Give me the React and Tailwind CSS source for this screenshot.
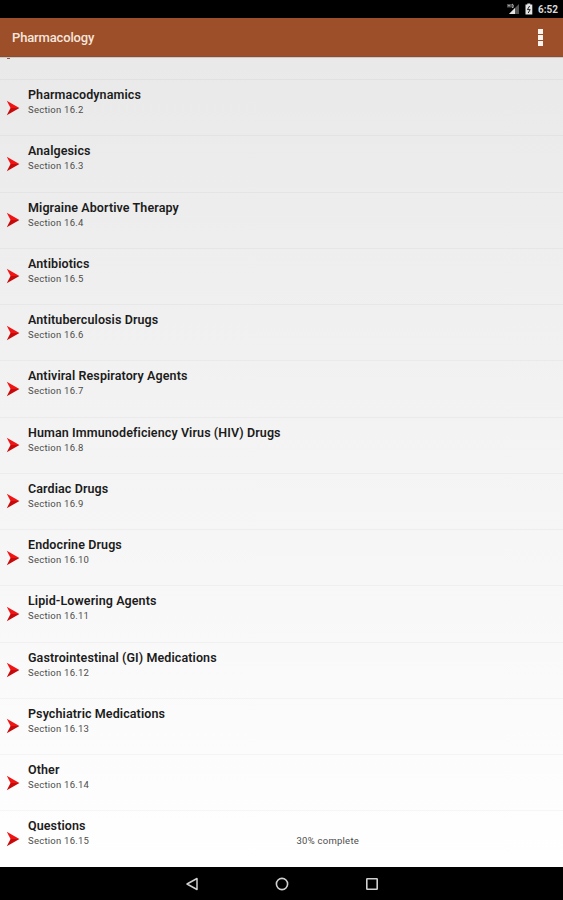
const sections = [
  'Pharmacodynamics',
  'Analgesics',
  'Migraine Abortive Therapy',
  'Antibiotics',
  'Antituberculosis Drugs',
  'Antiviral Respiratory Agents',
  'Human Immunodeficiency Virus (HIV) Drugs',
  'Cardiac Drugs',
  'Endocrine Drugs',
  'Lipid-Lowering Agents',
  'Gastrointestinal (GI) Medications',
  'Psychiatric Medications',
  'Other',
  'Questions',
];

function StatusBar() {
  return (
    <div className="h-[18px] bg-black flex items-center justify-end pr-[5px] text-[#d8d8d8]">
      <svg width="13" height="12" viewBox="0 0 13 12" className="mr-[5px]">
        <path d="M12 1v10H2z" fill="#555" />
        <path d="M8 5v6H2z" fill="#e4e4e4" />
        <path d="M1 1v3.5M1 2.7h2M3 1v3.5M5 1v3.5h1.2V1.8z" stroke="#c8c8c8" strokeWidth="0.8" fill="none" />
      </svg>
      <svg width="8" height="12" viewBox="0 0 8 12" className="mr-[5px]">
        <path d="M2.3 0.5h3v1H7.3v10H0.5v-10h1.8z" fill="#e4e4e4" />
        <path d="M4.6 3L2.4 6.6h2.8L3.2 10" stroke="#222" strokeWidth="1" fill="none" />
      </svg>
      <span className="text-[10px] leading-[18px] pt-px font-bold">6:52</span>
    </div>
  );
}

function AppBar() {
  return (
    <div className="h-[39px] bg-[#9c4f28] border-b border-[#89502f] flex items-center justify-between pl-3 pr-5 shrink-0">
      <h1 className="text-[13px] leading-4 pt-px tracking-[-0.15px] font-medium text-[#f7e6de]">Pharmacology</h1>
      <div className="flex flex-col gap-px">
        <span className="size-[5px] bg-[#fbf3ee]" />
        <span className="size-[5px] bg-[#fbf3ee]" />
        <span className="size-[5px] bg-[#fbf3ee]" />
      </div>
    </div>
  );
}

function Arrow() {
  return (
    <svg width="14" height="16" viewBox="0 0 14 16" className="mt-[19.5px] ml-[6px] shrink-0">
      <path d="M0.8 0.8L13.4 8L4.5 8z" fill="#f01414" />
      <path d="M13.4 8L0.8 15.2L4.5 8z" fill="#c40a0a" />
    </svg>
  );
}

function Row({ title, number, progress }) {
  return (
    <li className="h-[56.25px] flex border-t border-black/[0.03]">
      <Arrow />
      <div className="ml-2 pt-[7px] flex-1">
        <div className="text-[12.5px] leading-4 tracking-[0.1px] font-semibold text-[#1c1c1c]">{title}</div>
        <div className="flex text-[9.5px] leading-[14px] tracking-[0.25px] text-[#4c4c4c]">
          <span className="w-[268.5px]">Section 16.{number}</span>
          {progress && <span>{progress}</span>}
        </div>
      </div>
    </li>
  );
}

function NavBar() {
  return (
    <div className="h-[33px] bg-black flex items-center justify-center gap-[76px] shrink-0">
      <svg width="14" height="14" viewBox="0 0 14 14" fill="none" stroke="#d0d0d0" strokeWidth="1.5">
        <path d="M12 1.5v11L2 7z" strokeLinejoin="round" />
      </svg>
      <svg width="14" height="14" viewBox="0 0 14 14" fill="none" stroke="#d0d0d0" strokeWidth="1.6">
        <circle cx="7" cy="7" r="5.6" />
      </svg>
      <svg width="14" height="14" viewBox="0 0 14 14" fill="none" stroke="#d0d0d0" strokeWidth="1.6">
        <rect x="1.8" y="1.8" width="10.4" height="10.4" rx="0.5" />
      </svg>
    </div>
  );
}

export default function App() {
  return (
    <div className="w-[563px] h-[900px] flex flex-col overflow-hidden font-['Roboto',sans-serif]">
      <StatusBar />
      <AppBar />
      <div className="flex-1 overflow-hidden bg-linear-to-b from-[#e9e9e9] to-white">
        <div className="h-[22.1px] pl-[7px] border-t border-[#cfc8c4]">
          <div className="w-[3px] h-px bg-[#8a5a4a]" />
        </div>
        <ul>
          {sections.map((title, i) => (
            <Row key={title} title={title} number={i + 2} progress={title === 'Questions' ? '30% complete' : null} />
          ))}
        </ul>
      </div>
      <NavBar />
    </div>
  );
}
